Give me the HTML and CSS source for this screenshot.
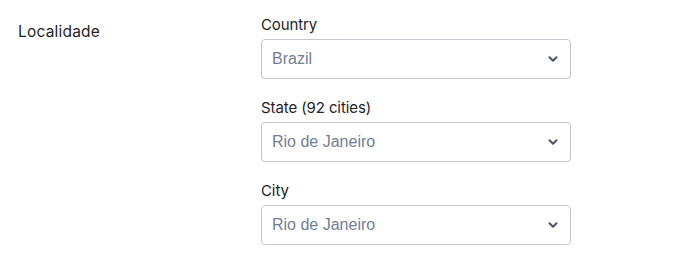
FILE: index.html
```html
<!DOCTYPE html>
<html>
<head>
<meta charset="utf-8">
<link rel="stylesheet" href="styles.css">
</head>
<body>
<div class="row">
  <div class="row-label">Localidade</div>
  <div class="fields">
    <div class="field">
      <div class="field-label">Country</div>
      <div class="select"><span class="value">Brazil</span><svg class="chev" width="12" height="8" viewBox="0 0 12 8"><path d="M2.5 2.2 L6 5.7 L9.5 2.2" fill="none" stroke="#4a5568" stroke-width="2" stroke-linecap="round" stroke-linejoin="round"/></svg></div>
    </div>
    <div class="field">
      <div class="field-label">State (92 cities)</div>
      <div class="select"><span class="value">Rio de Janeiro</span><svg class="chev" width="12" height="8" viewBox="0 0 12 8"><path d="M2.5 2.2 L6 5.7 L9.5 2.2" fill="none" stroke="#4a5568" stroke-width="2" stroke-linecap="round" stroke-linejoin="round"/></svg></div>
    </div>
    <div class="field">
      <div class="field-label">City</div>
      <div class="select"><span class="value">Rio de Janeiro</span><svg class="chev" width="12" height="8" viewBox="0 0 12 8"><path d="M2.5 2.2 L6 5.7 L9.5 2.2" fill="none" stroke="#4a5568" stroke-width="2" stroke-linecap="round" stroke-linejoin="round"/></svg></div>
    </div>
  </div>
</div>
</body>
</html>
```
FILE: styles.css
```css
html, body {
  margin: 0;
  padding: 0;
  background: #ffffff;
}
body {
  font-family: Inter, "Noto Sans", sans-serif;
  color: #1f2328;
}
.row {
  display: flex;
  padding: 14px 0 0 18px;
}
.row-label {
  width: 243px;
  font-size: 15.5px;
  letter-spacing: 0.2px;
  line-height: 22px;
  padding-top: 7px;
}
.fields {
  display: flex;
  flex-direction: column;
  gap: 18px;
  width: 310px;
}
.field {
  display: flex;
  flex-direction: column;
  gap: 4px;
}
.field-label {
  font-size: 15px;
  letter-spacing: -0.1px;
  line-height: 21px;
}
.select {
  box-sizing: border-box;
  height: 40px;
  border: 1px solid #c4c8cd;
  border-radius: 4px;
  display: flex;
  align-items: center;
  justify-content: space-between;
  padding: 0 11px 0 10px;
}
.value {
  font-family: "Liberation Sans", Arial, sans-serif;
  font-size: 16px;
  color: #718096;
}
.chev {
  display: block;
}
```
